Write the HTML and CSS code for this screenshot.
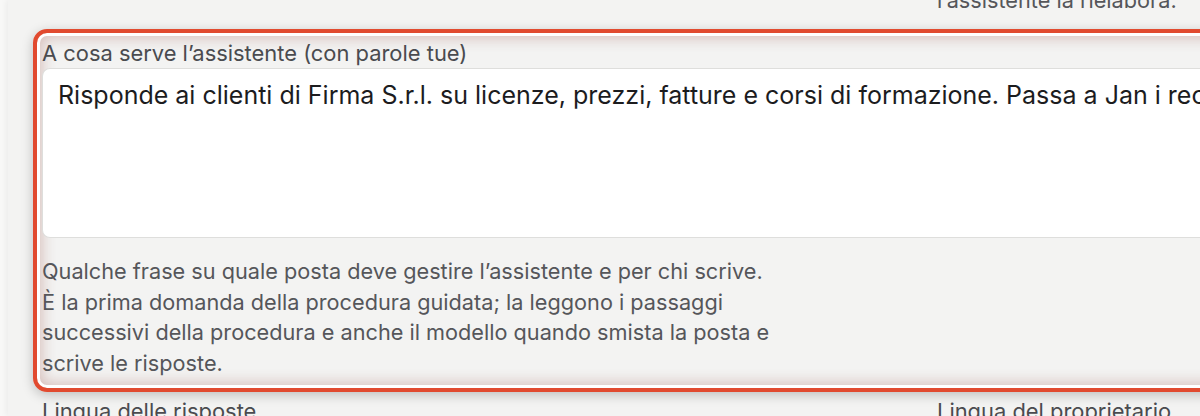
FILE: index.html
```html
<!DOCTYPE html>
<html lang="it">
<head>
<meta charset="utf-8">
<title>Assistente</title>
<link rel="stylesheet" href="styles.css">
</head>
<body>
<div class="panel">
  <div class="row row-top">
    <div class="col"></div>
    <div class="col hint">l’assistente la rielabora.</div>
  </div>
  <div class="field highlight">
    <div class="label">A cosa serve l’assistente (con parole tue)</div>
    <div class="textarea">Risponde ai clienti di Firma S.r.l. su licenze, prezzi, fatture e corsi di formazione. Passa a Jan i reclami e le richieste di rimborso.</div>
    <div class="hint help">Qualche frase su quale posta deve gestire l’assistente e per chi scrive.<br>È la prima domanda della procedura guidata; la leggono i passaggi successivi della procedura e anche il modello quando smista la posta e scrive le risposte.</div>
  </div>
  <div class="row row-bottom">
    <div class="col label">Lingua delle risposte</div>
    <div class="col label">Lingua del proprietario</div>
  </div>
</div>
</body>
</html>
```

FILE: styles.css
```css
* { box-sizing: border-box; }
html, body {
  margin: 0;
  height: 100%;
}
body {
  background: #f8f8f7;
  font-family: Inter, "Noto Sans", sans-serif;
  overflow: hidden;
}
.panel {
  margin-left: 8px;
  height: 100%;
  background: #f3f3f2;
  box-shadow: -2px 0 6px rgba(0, 0, 0, 0.05);
  padding-left: 34px;
  overflow: hidden;
}
.row {
  display: grid;
  grid-template-columns: 895px 1fr;
}
.row-top {
  margin-top: -15px;
  height: 44px;
}
.hint {
  font-size: 21.7px;
  line-height: 30.5px;
  color: #55565a;
}
.label {
  font-size: 21.9px;
  line-height: 26px;
  color: #4a4b4f;
  white-space: nowrap;
}
.field {
  margin-left: -9px;
  width: 1200px;
  padding: 7px 4px 10px 5px;
}
.highlight {
  border: 4px solid #e14a2f;
  border-radius: 14px;
  box-shadow:
    inset 0 0 0 3px #ffffff,
    inset 0 0 14px 5px rgba(150, 70, 60, 0.3),
    0 3px 12px rgba(0, 0, 0, 0.22);
}
.textarea {
  margin-top: 2px;
  height: 170px;
  background: #ffffff;
  border: 1px solid #dededc;
  border-right: none;
  border-radius: 8px 0 0 8px;
  padding: 11px 0 0 15px;
  font-size: 25px;
  line-height: 30px;
  color: #1c1c1e;
  white-space: nowrap;
  overflow: hidden;
}
.help {
  margin-top: 18px;
  max-width: 790px;
}
.row-bottom {
  margin-top: 6px;
}
```
